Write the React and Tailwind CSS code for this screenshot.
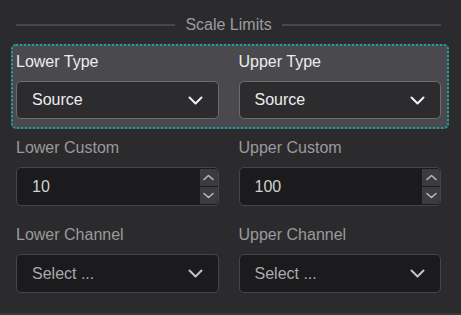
import React from "react";

const Chevron = ({ className = "" }) => (
  <svg width="15" height="9" viewBox="0 0 15 9" className={className} fill="none">
    <path d="M1.5 1.5 L7.5 7.5 L13.5 1.5" stroke="currentColor" strokeWidth="2" strokeLinecap="round" strokeLinejoin="round" />
  </svg>
);

const Small = ({ up }) => (
  <svg width="11" height="7" viewBox="0 0 11 7" fill="none">
    <path d={up ? "M1 5.5 L5.5 1.5 L10 5.5" : "M1 1.5 L5.5 5.5 L10 1.5"} stroke="currentColor" strokeWidth="1.6" strokeLinecap="round" strokeLinejoin="round" />
  </svg>
);

const TypeSelect = ({ value }) => (
  <div className="h-[38px] rounded-[5px] border border-[#6d6d71] bg-[#2c2c2f] flex items-center justify-between pl-[15px] pr-[15px] text-[16px] text-[#ededed]">
    <span>{value}</span>
    <Chevron className="text-[#f2f2f2]" />
  </div>
);

const NumberInput = ({ value }) => (
  <div className="h-[39px] rounded-[5px] border border-[#46464a] bg-[#1b1b1d] flex">
    <div className="flex-1 flex items-center pl-[15px] text-[16px] text-[#d0d0d0]">{value}</div>
    <div className="w-[18px] flex flex-col gap-[1px] py-[1px]">
      <div className="flex-1 bg-[#3c3c3f] rounded-tr-[4px] flex items-center justify-center text-[#b8b8bc]"><Small up /></div>
      <div className="flex-1 bg-[#3c3c3f] rounded-br-[4px] flex items-center justify-center text-[#b8b8bc]"><Small /></div>
    </div>
  </div>
);

const ChannelSelect = () => (
  <div className="h-[39px] rounded-[5px] border border-[#46464a] bg-[#1b1b1d] flex items-center justify-between pl-[15px] pr-[15px] text-[16px] text-[#a9a9ab]">
    <span>Select ...</span>
    <Chevron className="text-[#c4c4c6]" />
  </div>
);

export default function App() {
  return (
    <div className="w-[461px] h-[315px] bg-[#2b2b2d] flex flex-col overflow-hidden" style={{ fontFamily: '"Liberation Sans", Arial, sans-serif' }}>
      <div className="flex-1 flex flex-col pl-[16px] pr-[20px]">
        <div className="flex items-center gap-[10px] pt-[13px] h-[36px]">
          <div className="flex-1 h-[2px] bg-[#48484b]" />
          <span className="text-[16px] text-[#9c9c9e] leading-[20px]">Scale Limits</span>
          <div className="flex-1 h-[2px] bg-[#48484b]" />
        </div>
        <div className="mt-[8px] -ml-[5px] -mr-[8px] rounded-[5px] border-2 border-dotted border-[#18a3a3] bg-[#4a4a4e] pl-[3px] pr-[6px] pt-[6px] pb-[8px]">
          <div className="grid grid-cols-2 gap-x-[20px]">
            <div className="flex flex-col">
              <div className="h-[20px] text-[16px] leading-[20px] text-[#ececec] mb-[9px]">Lower Type</div>
              <TypeSelect value="Source" />
            </div>
            <div className="flex flex-col">
              <div className="h-[20px] text-[16px] leading-[20px] text-[#ececec] mb-[9px]">Upper Type</div>
              <TypeSelect value="Source" />
            </div>
          </div>
        </div>
        <div className="grid grid-cols-2 gap-x-[20px] mt-[9px]">
          <div className="flex flex-col">
            <div className="h-[20px] text-[16px] leading-[20px] text-[#9a9a9c] mb-[9px]">Lower Custom</div>
            <NumberInput value="10" />
            <div className="h-[20px] text-[16px] leading-[20px] text-[#9a9a9c] mt-[19px] mb-[9px]">Lower Channel</div>
            <ChannelSelect />
          </div>
          <div className="flex flex-col">
            <div className="h-[20px] text-[16px] leading-[20px] text-[#9a9a9c] mb-[9px]">Upper Custom</div>
            <NumberInput value="100" />
            <div className="h-[20px] text-[16px] leading-[20px] text-[#9a9a9c] mt-[19px] mb-[9px]">Upper Channel</div>
            <ChannelSelect />
          </div>
        </div>
      </div>
      <div className="h-[2px] bg-[#38383a]" />
    </div>
  );
}
